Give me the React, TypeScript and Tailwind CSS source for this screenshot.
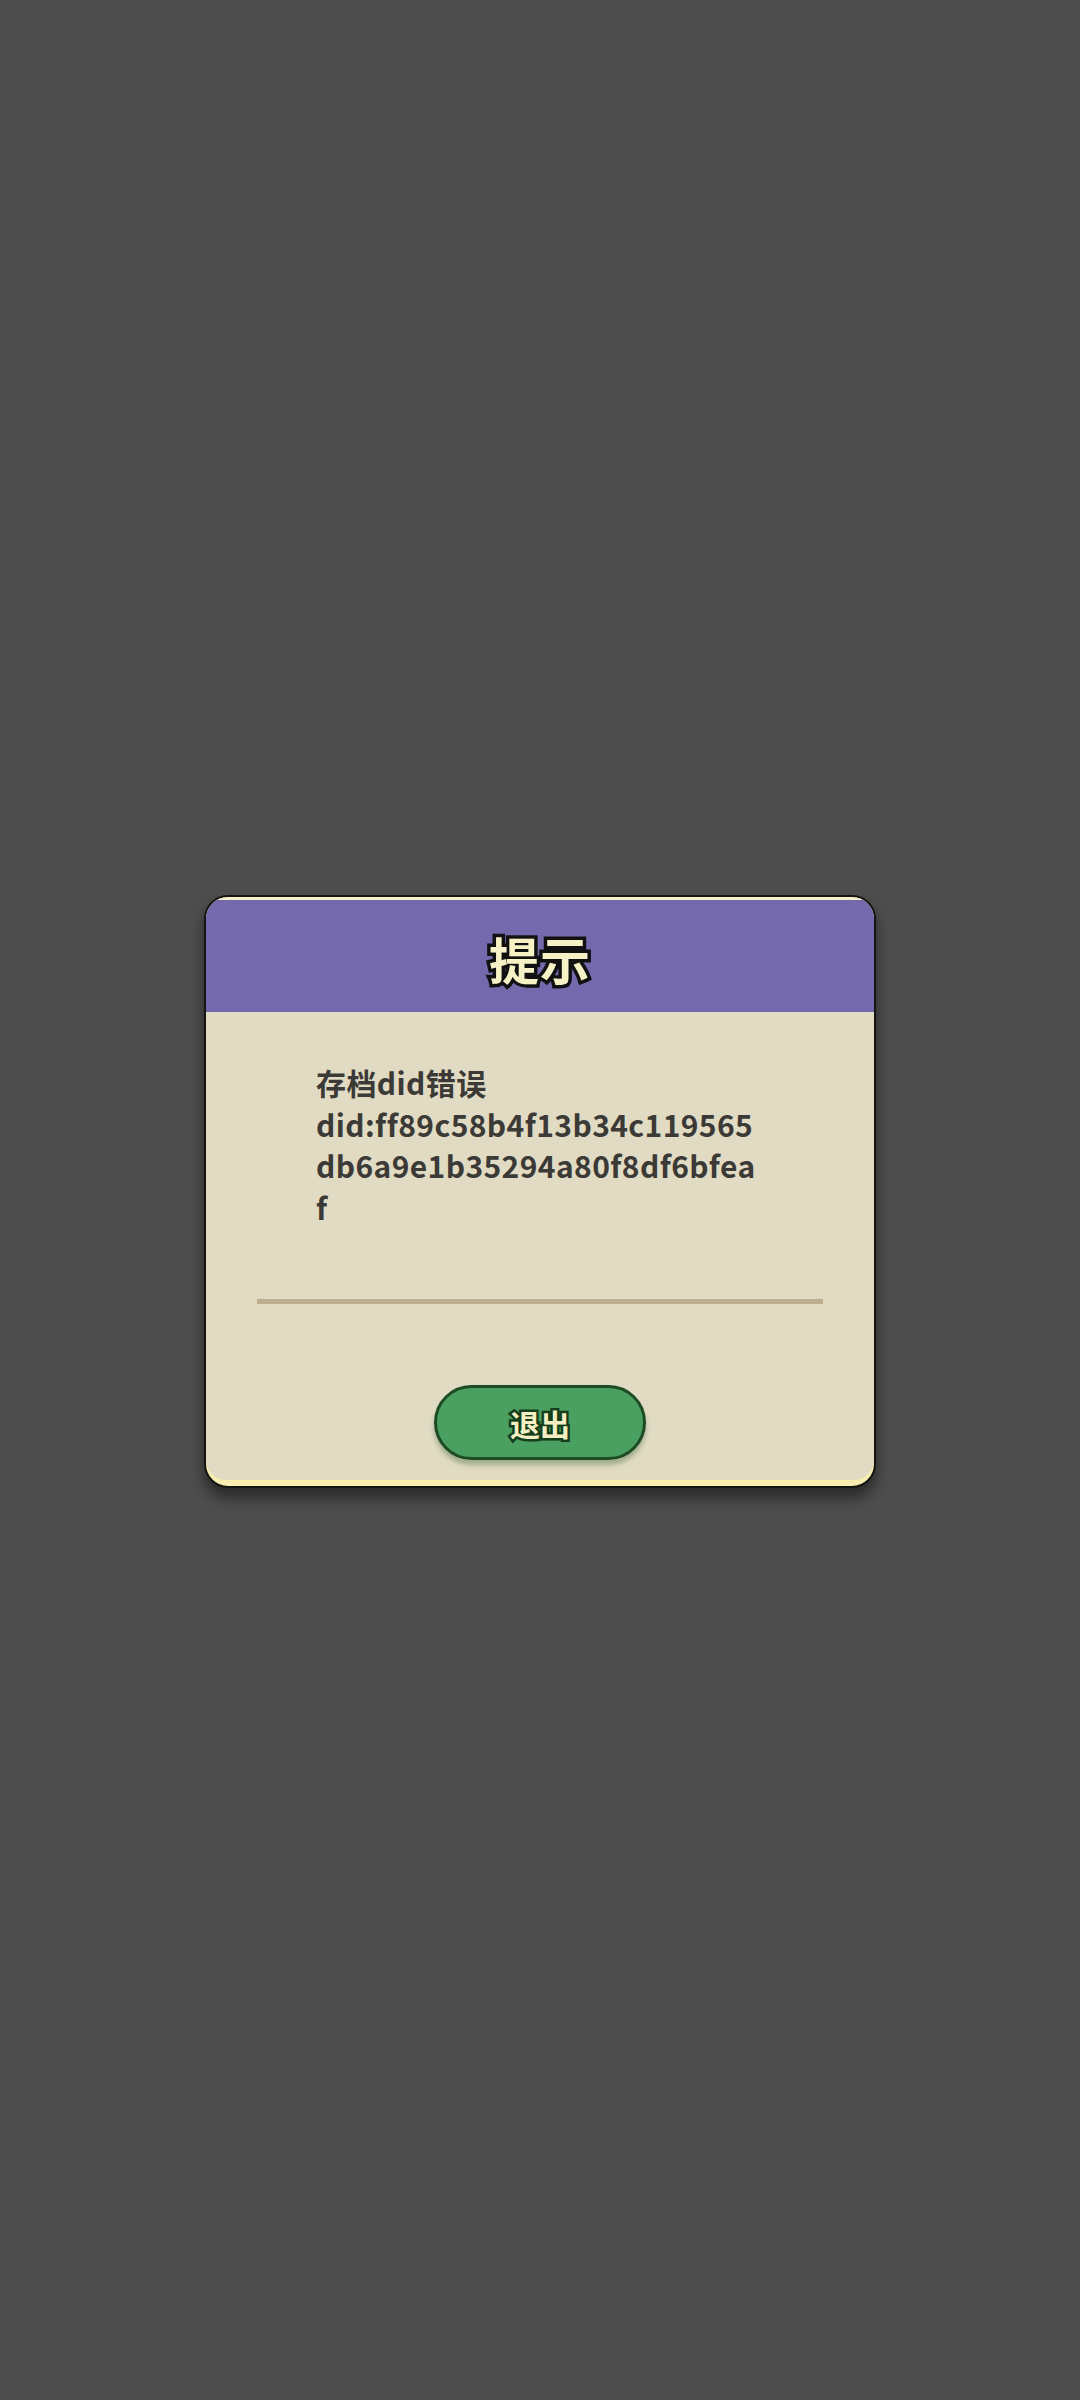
export default function App() {
  const font = "font-['Noto_Sans_CJK_SC','Noto_Sans',sans-serif]";
  return (
    <div className={`flex h-[2400px] w-[1080px] items-center justify-center bg-[#4d4d4d] pb-[17px] ${font}`}>
      {/* Dialog card */}
      <div className="w-[672px] rounded-[24px] border-2 border-[#141410] bg-[#f7eeb0] pb-[6px] shadow-[0_10px_14px_rgba(0,0,0,0.45)]">
        <div className="overflow-hidden rounded-[22px] rounded-b-[20px]">
          {/* Header */}
          <div className="flex h-[115px] items-center justify-center border-t-[3px] border-[#f5f0c8] bg-[#7569ae] pt-[4px]">
            <span className="text-[50px] font-bold leading-none tracking-[1px] text-[#f6f2c6] [-webkit-text-stroke:7px_#111] [paint-order:stroke_fill] [text-shadow:2px_3px_0_#111]">
              提示
            </span>
          </div>
          {/* Body */}
          <div className="flex flex-col items-center bg-[#e2dbc4] pt-[50px] pb-[20px]">
            <p className="w-[448px] break-all text-[30px] font-bold leading-[41.5px] tracking-[0.4px] text-[#3b3a36]">
              存档did错误
              <br />
              did:ff89c58b4f13b34c119565db6a9e1b35294a80f8df6bfeaf
            </p>
            <div className="mt-[71px] h-[5px] w-[566px] bg-[#bcae91]" />
            <button className="mt-[81px] flex h-[75px] w-[212px] items-center justify-center rounded-full border-[3px] border-[#1c4c24] bg-[#4aa060] shadow-[0_5px_5px_rgba(40,90,40,0.35)]">
              <span className="text-[30px] font-bold leading-none text-[#f4efc2] [-webkit-text-stroke:5px_#163d1c] [paint-order:stroke_fill] [text-shadow:1px_2px_0_#163d1c]">
                退出
              </span>
            </button>
          </div>
        </div>
      </div>
    </div>
  );
}
